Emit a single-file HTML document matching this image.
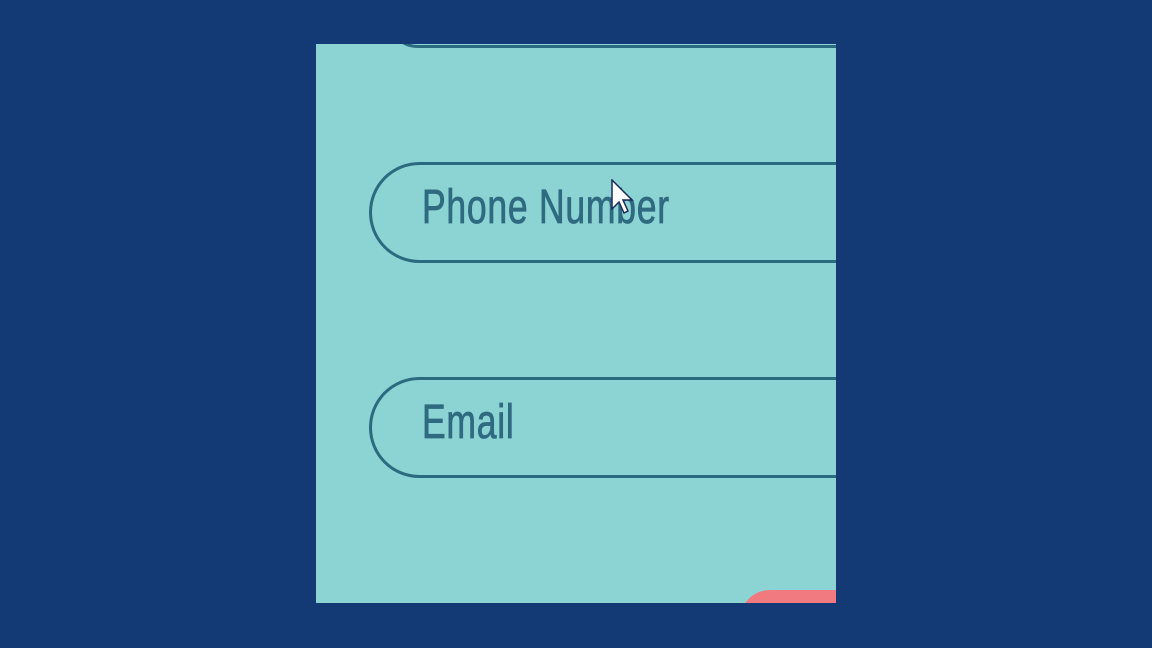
<!DOCTYPE html>
<html><head><style>
body{margin:0;width:1152px;height:648px;background:#143a75;overflow:hidden;position:relative}
.panel{position:absolute;left:316px;top:44px;width:520px;height:559px;background:#8bd4d3;overflow:hidden}
.inp{position:absolute;left:53px;width:600px;height:101px;border:3px solid #2c6b7f;border-radius:52px;box-sizing:border-box}
.t{position:absolute;left:106px;font-family:"Liberation Sans",sans-serif;font-size:48px;color:#2f6a80;transform:scaleX(0.74);transform-origin:left top;white-space:nowrap;letter-spacing:1px;-webkit-text-stroke:0.8px #2f6a80}
.top{position:absolute;left:70px;top:-60px;width:600px;height:64px;border:3px solid #2c6b7f;border-radius:50px;box-sizing:border-box}
.btn{position:absolute;left:424px;top:546px;width:200px;height:60px;background:#f07a80;border-radius:40px}
</style></head><body>
<div class="panel">
<div class="top"></div>
<div class="inp" style="top:118px"></div>
<div class="t" style="top:136px">Phone Number</div>
<div class="inp" style="top:333px"></div>
<div class="t" style="top:351px">Email</div>
<div class="btn"></div>
</div>
<svg style="position:absolute;left:611px;top:179px" width="26" height="40" viewBox="0 0 26 40"><path d="M1 1 L1 30 L8 23 L13 34 L17 32 L12 21 L21 21 Z" fill="#fff" stroke="#1a2a5a" stroke-width="1.5"/></svg>
</body></html>
